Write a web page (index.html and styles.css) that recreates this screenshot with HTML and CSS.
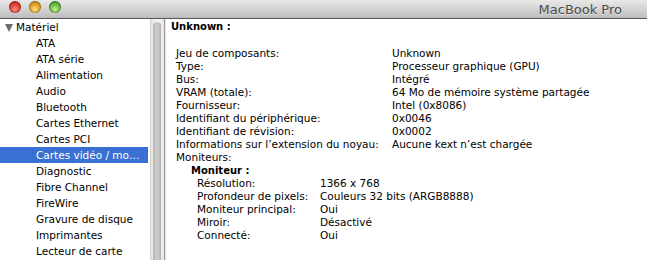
FILE: index.html
```html
<!DOCTYPE html>
<html lang="fr">
<head>
<meta charset="utf-8">
<link rel="stylesheet" href="styles.css">
</head>
<body>
<div class="window">
  <div class="titlebar">
    <div class="lights">
      <span class="light red"></span>
      <span class="light yellow"></span>
      <span class="light green"></span>
    </div>
    <div class="title">MacBook Pro</div>
  </div>
  <div class="main">
    <div class="sidebar">
      <ul class="tree">
        <li class="group"><span class="disclosure"></span>Matériel</li>
        <li>ATA</li>
        <li>ATA série</li>
        <li>Alimentation</li>
        <li>Audio</li>
        <li>Bluetooth</li>
        <li>Cartes Ethernet</li>
        <li>Cartes PCI</li>
        <li class="selected">Cartes vidéo / mo…</li>
        <li>Diagnostic</li>
        <li>Fibre Channel</li>
        <li>FireWire</li>
        <li>Gravure de disque</li>
        <li>Imprimantes</li>
        <li>Lecteur de carte</li>
      </ul>
    </div>
    <div class="scrollbar"><div class="thumb"></div></div>
    <div class="content">
      <div class="heading">Unknown :</div>
      <div class="props">
        <span>Jeu de composants:</span><span>Unknown</span>
        <span>Type:</span><span>Processeur graphique (GPU)</span>
        <span>Bus:</span><span>Intégré</span>
        <span>VRAM (totale):</span><span>64 Mo de mémoire système partagée</span>
        <span>Fournisseur:</span><span>Intel (0x8086)</span>
        <span>Identifiant du périphérique:</span><span>0x0046</span>
        <span>Identifiant de révision:</span><span>0x0002</span>
        <span>Informations sur l’extension du noyau:</span><span>Aucune kext n’est chargée</span>
      </div>
      <div class="line">Moniteurs:</div>
      <div class="monitor">
        <div class="subheading">Moniteur :</div>
        <div class="subprops">
          <span>Résolution:</span><span>1366 x 768</span>
          <span>Profondeur de pixels:</span><span>Couleurs 32 bits (ARGB8888)</span>
          <span>Moniteur principal:</span><span>Oui</span>
          <span>Miroir:</span><span>Désactivé</span>
          <span>Connecté:</span><span>Oui</span>
        </div>
      </div>
    </div>
  </div>
</div>
</body>
</html>
```
FILE: styles.css
```css
* { box-sizing: border-box; }
html, body { margin: 0; padding: 0; }
body {
  width: 647px;
  height: 260px;
  overflow: hidden;
  font-family: "DejaVu Sans", "Liberation Sans", sans-serif;
  font-size: 10.5px;
  color: #000;
  background: #fff;
}
.window {
  width: 647px;
  height: 260px;
  display: flex;
  flex-direction: column;
  overflow: hidden;
}
.titlebar {
  height: 19px;
  flex: none;
  display: flex;
  align-items: center;
  justify-content: space-between;
  background: linear-gradient(#e9e9e9, #cfcfcf 60%, #bdbdbd);
  border-bottom: 1px solid #575757;
  padding: 0 25px 1px 9px;
}
.lights { display: flex; gap: 8px; margin-top: -3px; }
.light {
  width: 12px;
  height: 12px;
  border-radius: 50%;
  display: block;
  box-shadow: inset 0 0 0 1px rgba(0,0,0,0.25);
}
.red { background: radial-gradient(circle at 50% 70%, #ff8c80 0%, #e0443b 45%, #a8180f 100%); }
.yellow { background: radial-gradient(circle at 50% 70%, #ffe38a 0%, #e3a52a 45%, #a86a09 100%); }
.green { background: radial-gradient(circle at 50% 70%, #c6f29a 0%, #6fbd44 45%, #2f7d1a 100%); }
.title {
  font-size: 13px;
  color: #4a4a4a;
  text-shadow: 0 1px 0 rgba(255,255,255,0.6);
  margin-top: 1px;
}
.main {
  flex: 1;
  display: flex;
  min-height: 0;
}
.sidebar {
  width: 151px;
  flex: none;
  border-right: 1px solid #d4d4d4;
  overflow: hidden;
}
.tree {
  list-style: none;
  margin: 0;
  padding: 0;
}
.tree li {
  height: 16px;
  line-height: 16px;
  padding-left: 36px;
  white-space: nowrap;
  margin-right: 2px;
}
.tree li.group {
  padding-left: 5px;
  display: flex;
  align-items: center;
  gap: 3px;
}
.disclosure {
  width: 0;
  height: 0;
  border-left: 4.5px solid transparent;
  border-right: 4.5px solid transparent;
  border-top: 8px solid #6e6e6e;
  margin-top: 1px;
}
.tree li.selected {
  background: #3a6fd4;
  color: #fff;
}
.scrollbar {
  width: 14px;
  flex: none;
  background: linear-gradient(90deg, #e2e2e2, #f2f2f2 30%, #f2f2f2 70%, #e6e6e6);
  border-right: 1px solid #9c9c9c;
  padding: 3px 3px 0 2px;
}
.thumb {
  height: 100%;
  border-radius: 4px 4px 0 0;
  background: linear-gradient(90deg, #b4b4b4, #cbcbcb 40%, #c6c6c6 70%, #aeaeae);
}
.content {
  flex: 1;
  padding: 1px 0 0 5px;
  line-height: 13px;
  white-space: nowrap;
  border-left: 1px solid #e4e4e4;
}
.heading {
  font-weight: bold;
  font-size: 10px;
  margin-bottom: 14px;
}
.props {
  display: grid;
  grid-template-columns: 216px auto;
  padding-left: 5px;
}
.line { padding-left: 5px; }
.monitor { padding-left: 20px; }
.subheading {
  font-weight: bold;
  font-size: 10px;
}
.subprops {
  display: grid;
  grid-template-columns: 123px auto;
  padding-left: 6px;
}
```
